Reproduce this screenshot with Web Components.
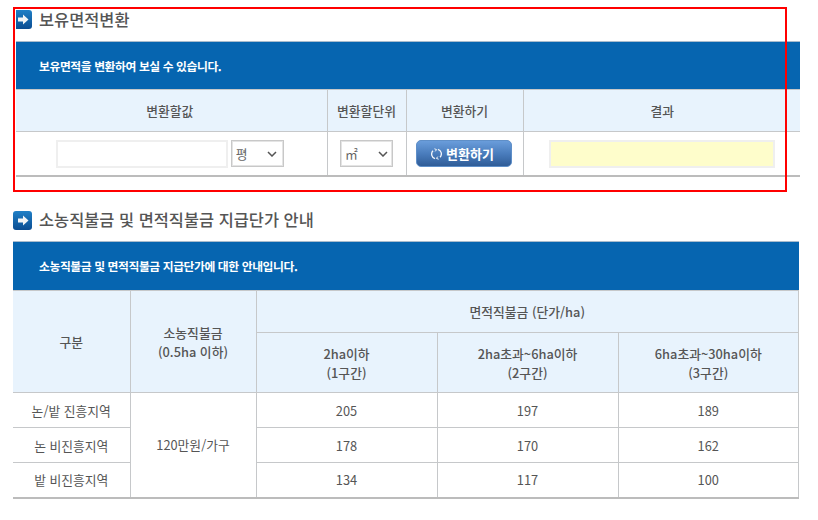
<!DOCTYPE html>
<html lang="ko">
<head>
<meta charset="utf-8">
<title>보유면적변환</title>
<style>
  html, body { margin: 0; background: #fff; }
  body {
    position: relative;
    width: 818px;
    height: 520px;
    overflow: hidden;
    font-family: "Noto Sans CJK KR", "Noto Sans", sans-serif;
    color: #555;
  }
  .first { display: block; margin: 9px 18px 0 16px; --lead-pad: 23px; --lead-height: 48px; --lead-lift: 0px; --title-gap: 11px; --title-lift: 0px; }
  .second { display: block; margin: 33px 19px 0 13px; --lead-pad: 26px; --lead-height: 49px; --lead-lift: 2px; --title-gap: 10px; --title-lift: 2px; }
</style>
</head>
<body>
<info-section class="first" clipped heading="보유면적변환" lead="보유면적을 변환하여 보실 수 있습니다.">
  <convert-table></convert-table>
</info-section>
<info-section class="second" heading="소농직불금 및 면적직불금 지급단가 안내" lead="소농직불금 및 면적직불금 지급단가에 대한 안내입니다.">
  <price-table></price-table>
</info-section>
<red-mark></red-mark>

<script>
const tableCss = `
  table { border-collapse: collapse; table-layout: fixed; width: 100%; font-size: 12.8px; color: #555; }
  th, td { border: 1px solid #c6c8ca; padding: 0; text-align: center; vertical-align: middle; line-height: 19px; }
  th { background: #e8f3fd; font-weight: 500; color: #555; }
  tr > :first-child { border-left: 0; }
  tbody tr:last-child > *, td[rowspan] { border-bottom: 2px solid #bcbcbc; }
`;

class InfoSection extends HTMLElement {
  constructor() {
    super();
    this.attachShadow({ mode: "open" });
  }

  connectedCallback() {
    const heading = this.getAttribute("heading") || "";
    const lead = this.getAttribute("lead") || "";
    const clipped = this.hasAttribute("clipped");
    const size = clipped ? 'width="16" height="19" viewBox="3 0 16 19"' : 'width="19" height="19" viewBox="0 0 19 19"';
    this.shadowRoot.innerHTML = `
      <style>
        :host { display: block; }
        h2 {
          display: flex; align-items: center; gap: 7px;
          margin: 0 0 var(--title-gap, 11px); height: 21px;
          font-size: 16.4px; font-weight: 500; line-height: 21px; color: #555;
          white-space: pre;
        }
        h2 span { padding-bottom: var(--title-lift, 0px); }
        svg { flex: none; display: block; }
        p {
          margin: 0; height: var(--lead-height, 48px); box-sizing: border-box;
          padding: 0 0 var(--lead-lift, 0px) var(--lead-pad, 23px);
          display: flex; align-items: center;
          background: #0665b0; border-top: 1px solid #a9bccd;
          color: #fff; font-size: 11.8px; font-weight: 700; letter-spacing: -0.4px;
        }
      </style>
      <h2>
        <svg ${size}>
          <defs>
            <linearGradient id="g" x1="0" y1="0" x2="0" y2="1">
              <stop offset="0" stop-color="#1f7fc6"/>
              <stop offset="1" stop-color="#0b4d92"/>
            </linearGradient>
          </defs>
          <rect width="19" height="19" rx="3" fill="url(#g)"/>
          <path d="M5 7.5h5V4.5l5.5 5-5.5 5v-3H5z" fill="#f2f4f6"/>
        </svg>
        <span>${heading}</span>
      </h2>
      <p>${lead}</p>
      <slot></slot>
    `;
  }
}

class UnitSelect extends HTMLElement {
  constructor() {
    super();
    this.attachShadow({ mode: "open" });
  }

  connectedCallback() {
    const opts = (this.getAttribute("options") || "").split(",");
    const right = this.getAttribute("arrow-right") || "7";
    this.shadowRoot.innerHTML = `
      <style>
        :host { display: inline-block; position: relative; width: 53px; height: 27px; vertical-align: middle; }
        select {
          appearance: none; display: block; width: 100%; height: 100%; box-sizing: border-box;
          margin: 0; padding: 0 0 0 4px;
          border: 1px solid #c8c8c8; outline: 1px solid #e4e4e4; outline-offset: -2px;
          border-radius: 0; background: #fff;
          font: 12.8px "Noto Sans CJK KR", sans-serif; color: #666;
        }
        svg { position: absolute; right: ${right}px; top: 11px; pointer-events: none; }
      </style>
      <select>${opts.map((o) => `<option>${o}</option>`).join("")}</select>
      <svg width="10" height="6" viewBox="0 0 10 6"><path d="M1 1l4 4 4-4" fill="none" stroke="#555" stroke-width="1.5"/></svg>
    `;
  }
}

class ConvertButton extends HTMLElement {
  constructor() {
    super();
    this.attachShadow({ mode: "open" });
  }

  connectedCallback() {
    this.shadowRoot.innerHTML = `
      <style>
        :host { display: inline-block; vertical-align: middle; }
        button {
          display: flex; align-items: center; justify-content: center; gap: 4px;
          width: 96px; height: 27px; padding: 0 2px 0 0; box-sizing: border-box;
          border: 1px solid #5f8fc8; border-radius: 5px;
          background: linear-gradient(#6a9ddb, #4a7dbd 50%, #2f5c97);
          color: #fff; font: 700 13px "Noto Sans CJK KR", sans-serif;
        }
      </style>
      <button type="button">
        <svg width="11" height="12" viewBox="0 0 11 12" fill="none" stroke="#f4f7fb" stroke-width="1.3">
          <path d="M7 1.3A4.8 4.8 0 0 1 9 9.2"/>
          <path d="M4 10.7A4.8 4.8 0 0 1 2 2.8"/>
          <path d="M3.4 .8L5.6 1.6 4.2 3.4M7.6 11.2L5.4 10.4 6.8 8.6" stroke-width="1"/>
        </svg>
        <span>변환하기</span>
      </button>
    `;
  }
}

class ConvertTable extends HTMLElement {
  constructor() {
    super();
    this.attachShadow({ mode: "open" });
  }

  connectedCallback() {
    this.shadowRoot.innerHTML = `
      <style>
        :host { display: block; }
        ${tableCss}
        th { height: 41px; }
        td { height: 43px; font-size: 0; }
        tr > :last-child { border-right: 0; }
        .box { box-sizing: border-box; height: 28px; border: 2px solid #efefef; margin: 0; padding: 0; vertical-align: middle; }
        .value { width: 172px; margin-right: 3px; background: #fff; }
        .result { width: 226px; background: #fefdcb; }
        .pad-value { padding-right: 3px; }
        .pad-button { padding-right: 2px; }
        .pad-result { padding-left: 1px; }
      </style>
      <table>
        <colgroup><col style="width:311px"><col style="width:79px"><col style="width:117px"><col></colgroup>
        <thead><tr><th class="pad-value">변환할값</th><th>변환할단위</th><th>변환하기</th><th class="pad-result">결과</th></tr></thead>
        <tbody><tr>
          <td class="pad-value"><input class="box value" type="text"><unit-select options="평,㎡,ha"></unit-select></td>
          <td><unit-select options="㎡,평,ha" arrow-right="5"></unit-select></td>
          <td class="pad-button"><convert-button></convert-button></td>
          <td class="pad-result"><input class="box result" type="text" readonly></td>
        </tr></tbody>
      </table>
    `;
  }
}

class PriceTable extends HTMLElement {
  constructor() {
    super();
    this.attachShadow({ mode: "open" });
  }

  connectedCallback() {
    const rows = [
      ["논/밭 진흥지역", "205", "197", "189"],
      ["논 비진흥지역", "178", "170", "162"],
      ["밭 비진흥지역", "134", "117", "100"],
    ];
    const body = rows.map((r, i) => `
      <tr>
        <td>${r[0]}</td>
        ${i === 0 ? `<td rowspan="3">120만원/가구</td>` : ""}
        <td>${r[1]}</td><td>${r[2]}</td><td>${r[3]}</td>
      </tr>`).join("");
    this.shadowRoot.innerHTML = `
      <style>
        :host { display: block; }
        ${tableCss}
        thead tr:first-child th { height: 41px; }
        thead tr:last-child th { height: 59px; }
        tbody tr { height: 35px; }
      </style>
      <table>
        <colgroup><col style="width:117px"><col style="width:126px"><col style="width:181px"><col style="width:181px"><col></colgroup>
        <thead>
          <tr>
            <th rowspan="2">구분</th>
            <th rowspan="2">소농직불금<br>(0.5ha 이하)</th>
            <th colspan="3">면적직불금 (단가/ha)</th>
          </tr>
          <tr>
            <th>2ha이하<br>(1구간)</th>
            <th>2ha초과~6ha이하<br>(2구간)</th>
            <th>6ha초과~30ha이하<br>(3구간)</th>
          </tr>
        </thead>
        <tbody>${body}</tbody>
      </table>
    `;
  }
}

class RedMark extends HTMLElement {
  constructor() {
    super();
    this.attachShadow({ mode: "open" });
  }

  connectedCallback() {
    this.shadowRoot.innerHTML = `
      <style>
        :host {
          position: absolute; left: 13px; top: 7px; width: 774px; height: 185px;
          box-sizing: border-box; border: 2px solid #f00; pointer-events: none;
        }
      </style>
    `;
  }
}

customElements.define("info-section", InfoSection);
customElements.define("unit-select", UnitSelect);
customElements.define("convert-button", ConvertButton);
customElements.define("convert-table", ConvertTable);
customElements.define("price-table", PriceTable);
customElements.define("red-mark", RedMark);
</script>
</body>
</html>
